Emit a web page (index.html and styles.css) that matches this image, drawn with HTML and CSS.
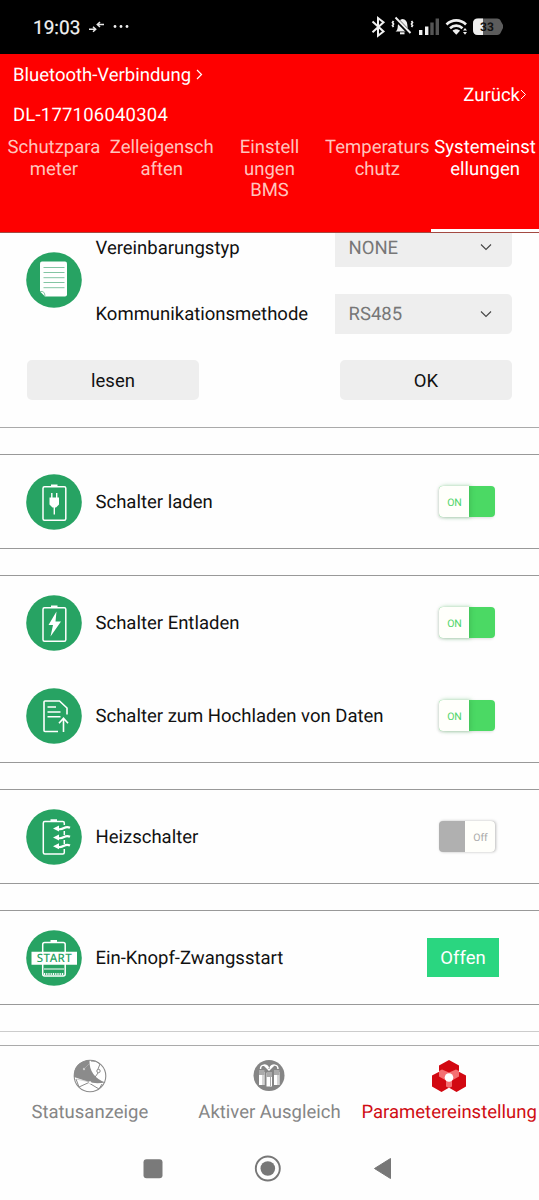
FILE: index.html
```html
<!DOCTYPE html>
<html lang="de">
<head>
<meta charset="utf-8">
<title>Parametereinstellung</title>
<link rel="stylesheet" href="styles.css">
</head>
<body>
<div class="screen">
  <div class="status">
    <span class="clock">19:03</span>
    <svg class="status-left" width="44" height="20" viewBox="0 0 44 20" fill="none" stroke="#e8e8e8" stroke-width="1.5">
      <path d="M1 12.200h6M5 9.700l2.700 2.500L5 14.700M16 7.500H9.500M12 5L9.300 7.500 12 10"/>
      <g fill="#eee" stroke="none"><circle cx="27" cy="9.500" r="1.400"/><circle cx="33" cy="9.500" r="1.400"/><circle cx="39" cy="9.500" r="1.400"/></g>
    </svg>
    <svg class="status-right" width="134" height="24" viewBox="370 15 134 24" fill="none" stroke="#f0f0f0">
      <path d="M372.500 21.500l11 10-5.500 4.200V18l5.500 4.200-11 10" stroke-width="2"/>
      <path d="M395.500 31.500c2.500-1.500 2-4 2.500-7 .5-3.500 2-5 4.500-5.500 3 .5 4.500 2 4.800 5.500.4 3 .2 5.500 2.700 7z" fill="#f0f0f0" stroke="none"/>
      <path d="M400 33.300h4.500" stroke-width="2"/>
      <path d="M395.500 18.500l14.500 15" stroke="#000" stroke-width="4"/>
      <path d="M395.500 17.500l15 15.500" stroke-width="1.900"/>
      <path d="M393.500 21l-1 1.500 1 1.500-1 1.500 1 1.500M411.500 21l1 1.500-1 1.500 1 1.500-1 1.500" stroke-width="1.700"/>
      <path d="M420.700 30v5M426.700 26.500V35" stroke-width="3.400"/>
      <path d="M432 22.500V35M437.300 18.500V35" stroke="#555" stroke-width="3.400"/>
      <path d="M446.500 24.500c5.500-5.500 14-5.500 19.500 0M450 28.200c3.700-3.500 8.800-3.500 12.500 0" stroke-width="2.600"/>
      <path d="M452.500 30.800c2-2 5.500-2 7.500 0l-3.700 4z" fill="#f0f0f0" stroke="none"/>
      <path d="M463 30.500l2-2.500 2 2.500zM463 32l2 2.800 2-2.800z" fill="#f0f0f0" stroke="none"/>
      <path d="M478 18.500h19q3 0 4 3l2 3.500v3l-2 4q-1 3-4 3h-19q-5 0-5-5v-6.500q0-5 5-5z" fill="#5c5c5c" stroke="none"/>
      <path d="M483 18.500h-5q-5 0-5 5V30q0 5 5 5h5z" fill="#eee" stroke="none"/>
      <text class="battery-level" x="487" y="31.300">33</text>
    </svg>
  </div>

  <header class="header">
    <div class="device">
      <div class="link"><span>Bluetooth-Verbindung</span><svg width="7" height="11" viewBox="0 0 7 11"><path d="M1 1l4.500 4.500L1 10" fill="none" stroke="#fff" stroke-width="1.200"/></svg></div>
      <div class="serial">DL-177106040304</div>
    </div>
    <div class="back"><span>Zurück</span><svg width="7" height="11" viewBox="0 0 7 11"><path d="M1 1l4.500 4.500L1 10" fill="none" stroke="#fff"/></svg></div>
  </header>
  <nav class="tabs">
    <div class="tab">Schutzpara<br>meter</div>
    <div class="tab">Zelleigensch<br>aften</div>
    <div class="tab">Einstell<br>ungen<br>BMS</div>
    <div class="tab">Temperaturs<br>chutz</div>
    <div class="tab active">Systemeinst<br>ellungen</div>
  </nav>

  <main class="content">
    <section class="protocol">
      <div class="fields">
        <svg class="badge" viewBox="0 0 56 56"><circle cx="28" cy="28" r="27.800" fill="#27a363"/><path d="M16 9.500h23q2 0 2 2v31q0 2-2 2H19l-5-5v-28q0-2 2-2z" fill="#fff"/><path d="M17.500 15.500h21M17.500 20.500h21M17.500 25.700h21M17.500 30.500h21M17.500 35.700h21M14 39.500q5-1 5 5" fill="none" stroke="#83c5a3"/></svg>
        <div class="field-list">
          <div class="field"><span>Vereinbarungstyp</span><div class="select"><span>NONE</span><svg width="12" height="8" viewBox="0 0 12 8"><path d="M1 1.500l5 5 5-5" fill="none" stroke="#444" stroke-width="1.100"/></svg></div></div>
          <div class="field"><span>Kommunikationsmethode</span><div class="select"><span>RS485</span><svg width="12" height="8" viewBox="0 0 12 8"><path d="M1 1.500l5 5 5-5" fill="none" stroke="#444" stroke-width="1.100"/></svg></div></div>
        </div>
      </div>
      <div class="actions"><button class="btn">lesen</button><button class="btn">OK</button></div>
    </section>

    <section class="card">
      <div class="row">
        <svg class="badge" viewBox="0 0 56 56"><circle cx="28" cy="28" r="27.800" fill="#27a363"/><rect x="17" y="12.700" width="22.800" height="33.600" rx="1.500" fill="none" stroke="#fff" stroke-width="1.500"/><path d="M25 10.500h6.500V13H25zM23.500 23.500H33v7L30 33.500h-3.500l-3-3z" fill="#fff"/><path d="M25.800 19v5M30.700 19v5M28.300 33v7.500" stroke="#fff" stroke-width="1.400"/></svg>
        <span class="label">Schalter laden</span>
        <div class="toggle on"><span>ON</span></div>
      </div>
    </section>

    <section class="card">
      <div class="row">
        <svg class="badge" viewBox="0 0 56 56"><circle cx="28" cy="28" r="27.800" fill="#27a363"/><rect x="17" y="12.700" width="22.800" height="33.600" rx="1.500" fill="none" stroke="#fff" stroke-width="1.500"/><path d="M25 10.500h6.500V13H25zM30.500 16.500l-8 13.500h4.500l-2.500 11.500 10.500-15h-5.500z" fill="#fff"/></svg>
        <span class="label">Schalter Entladen</span>
        <div class="toggle on"><span>ON</span></div>
      </div>
      <div class="row">
        <svg class="badge" viewBox="0 0 56 56"><circle cx="28" cy="28" r="27.800" fill="#27a363"/><path d="M32 43.500H19q-1 0-1-1V14q0-1 1-1h14.500l7.500 7v6.500M21.500 19H30M21.500 24h13M21.500 28.700h13M37.500 44V30.500M33 35.300l4.500-5 4.500 5" fill="none" stroke="#fff" stroke-width="1.600"/></svg>
        <span class="label">Schalter zum Hochladen von Daten</span>
        <div class="toggle on"><span>ON</span></div>
      </div>
    </section>

    <section class="card">
      <div class="row">
        <svg class="badge" viewBox="0 0 56 56"><circle cx="28" cy="28" r="27.800" fill="#27a363"/><path d="M38.300 16v-2q0-1.500-1.500-1.500h-18q-1.500 0-1.500 1.500v29.500q0 1.500 1.500 1.500h18q1.500 0 1.500-1.500V40M38.300 22v4M38.300 31v4" fill="none" stroke="#fff" stroke-width="1.500"/><path d="M24.500 10.200H31v2.500h-6.500zM27 19.500l6-3v6zM27 28.500l6-3v6zM27 37.300l6-3v6z" fill="#fff"/><path d="M32 20q3 .8 6-1t6-.3M32 29q3 .8 6-1t6-.3M32 37.800q3 .8 6-1t6-.3" fill="none" stroke="#fff" stroke-width="2.200"/></svg>
        <span class="label">Heizschalter</span>
        <div class="toggle off"><span>Off</span></div>
      </div>
    </section>

    <section class="card">
      <div class="row">
        <svg class="badge" viewBox="0 0 56 56"><circle cx="28" cy="28" r="27.800" fill="#27a363"/><rect x="16.700" y="12.500" width="22.500" height="33.500" rx="2" fill="none" stroke="#fff" stroke-width="1.500"/><path d="M24.500 10H31v2.500h-6.500zM5.500 21.700H51v13H5.500z" fill="#fff"/><path d="M18 39h20" stroke="#fff"/><path d="M18 44h20" stroke="#fff" stroke-width="1.800" stroke-dasharray="1 .8"/><text class="start-text" x="10.800" y="32" textLength="35">START</text></svg>
        <span class="label">Ein-Knopf-Zwangsstart</span>
        <button class="open">Offen</button>
      </div>
    </section>
    <div class="card-edge"></div>
  </main>

  <nav class="bottom">
    <div class="item">
      <svg width="34" height="34" viewBox="0 0 34 34"><circle cx="17" cy="17" r="15.800" fill="#fff" stroke="#8b8b8b" stroke-width="1.100"/><path d="M16.500 1C16 12 22 20 32.500 23.500Q22 25 16 23L1 18Q0 3 16.500 1z" fill="#8b8b8b"/><g fill="none" stroke="#8b8b8b"><path d="M18 2q5-1 9 3l-2 5v4l-5 7M3 20l3 8M6 28l11-5M16 24l10 6 3-5"/><circle cx="25.500" cy="12" r="1.700" fill="#fff"/></g><circle cx="11" cy="10" r="1.200" fill="#ccc"/><path d="M11 10l6-6M3 20l14 3" stroke="#bbb" stroke-width=".6"/><circle cx="17" cy="23.500" r="1.300" fill="#fff"/></svg>
      <span>Statusanzeige</span>
    </div>
    <div class="item">
      <svg width="34" height="34" viewBox="0 0 34 34"><circle cx="17" cy="16.500" r="15.500" fill="#858585"/><path d="M7 13h5.500v13H7zM14.500 14H20v13.500h-5.500zM22 13h5.500v13H22z" fill="#fff"/><path d="M7 11h5.500v5H7zM14.500 13H20v5h-5.500zM22 11h5.500v5H22z" fill="#aaa"/><path d="M11 16v10M18.500 18v9M26 16v10" stroke="#aaa"/><path d="M8.500 10c0-5 6-5 8-1M18 9c2-4 8-4 8 1M12 6l5 5 5-5" fill="none" stroke="#fff" stroke-width="1.500"/></svg>
      <span>Aktiver Ausgleich</span>
    </div>
    <div class="item selected">
      <svg width="34" height="34" viewBox="0 0 34 34"><path d="M17 1l10 5.500v11L17 23 7 17.500v-11zM9.500 11.500l9.500 5v11L9.500 33 0 27.500v-11zM24.500 11.500l9.500 5v11L24.500 33 15 27.500v-11z" fill="#d20811"/><path d="M7 12l3-1.500 7 3 7-3 3 1.500v5.500l-7 4v6l-3 1.500-3-1.500v-6l-7-4z" fill="#f46f72"/><circle cx="17" cy="18.500" r="4.300" fill="#fff"/></svg>
      <span>Parametereinstellung</span>
    </div>
  </nav>
  <div class="system-nav">
    <svg width="252" height="30" viewBox="141 1153 252 30"><rect x="143.500" y="1159.300" width="19" height="19" rx="3" fill="#7a7a7a"/><circle cx="267.800" cy="1168.500" r="12" fill="none" stroke="#777" stroke-width="1.900"/><circle cx="267.800" cy="1168.500" r="7.300" fill="#777"/><path d="M390.500 1158.500v20l-16-10z" fill="#777" stroke="#777" stroke-linejoin="round"/></svg>
  </div>
</div>
</body>
</html>
```
FILE: styles.css
```css
* { box-sizing: border-box; }
body { margin: 0; background: #fff; font-family: Roboto, "Liberation Sans", sans-serif; font-size: 18.5px; color: #111; text-rendering: geometricPrecision; }
svg { display: block; flex: none; }
button { border: 0; padding: 0; font: inherit; color: inherit; }
.screen { width: 539px; height: 1200px; overflow: hidden; display: flex; flex-direction: column; background: #fefefe; }

.status { height: 54px; flex: none; background: #000; display: flex; align-items: center; padding: 0 35px 0 33px; color: #f2f2f2; }
.clock { font-size: 19px; font-weight: 400; width: 55px; -webkit-text-stroke: .2px #f2f2f2; }
.status-right { margin-left: auto; }
.battery-level { font-size: 12px; font-weight: 700; fill: #111; stroke: none; text-anchor: middle; }

.header { height: 80px; flex: none; background: #fe0000; color: #fff; display: flex; justify-content: space-between; padding: 1px 12px 0 13px; }
.device { line-height: 40px; }
.link, .back { display: flex; align-items: center; height: 40px; }
.link { gap: 5px; }
.link svg { margin-top: -2px; }
.serial { letter-spacing: .2px; }
.back { height: 80px; }
.back svg { margin-top: -2px; }

.tabs { height: 99px; flex: none; background: #fe0000; border-bottom: 1px solid #a34a42; display: grid; grid-template-columns: repeat(5, 1fr); }
.tab { color: #ffc4bd; text-align: center; line-height: 21.5px; padding-top: 3px; white-space: nowrap; }
.tab.active { color: #fff; border-bottom: 3px solid #fff; }

.content { height: 812px; flex: none; overflow: hidden; }
.protocol { height: 195px; border-bottom: 1px solid #aaa; }
.fields { display: flex; gap: 13.500px; padding-left: 26px; height: 100.500px; }
.fields .badge { margin-top: 19px; }
.field-list { flex: 1; display: flex; flex-direction: column; justify-content: space-between; margin-top: -5.500px; padding-right: 27px; }
.field { display: flex; align-items: center; justify-content: space-between; height: 39.500px; }
.field span { padding-top: 1px; }
.select { width: 177px; height: 39.500px; background: #eee; border-radius: 0 5px 5px 0; display: flex; align-items: center; justify-content: space-between; padding: 0 20px 0 13.500px; color: #777; }
.actions { display: flex; justify-content: space-between; padding: 26.500px 27px 0; }
.btn { width: 172px; height: 40px; border-radius: 5px; background: #eee; padding-top: 1px; }

.badge { width: 56px; height: 56px; flex: none; }
.card { margin-top: 26px; border-top: 1px solid #999; border-bottom: 1px solid #999; }
.row { height: 93px; display: flex; align-items: center; padding: 0 40px 0 26px; }
.label { margin-left: 13.500px; padding-top: 1px; flex: 1; }
.start-text { font-family: "Noto Sans", sans-serif; font-size: 11.500px; font-weight: 500; fill: #27a363; }
.toggle { width: 56px; height: 31px; margin-right: 4px; border-radius: 4px; font-size: 10.500px; display: flex; align-items: center; }
.toggle span { width: 30px; height: 31px; padding-left: 1px; line-height: 33px; text-align: center; background: #fffffb; }
.toggle.on { background: #4bd964; color: #4ed469; box-shadow: -1px 1px 3px #ddd; }
.toggle.on span { border-radius: 4px 0 0 4px; box-shadow: 2px 0 4px #3cae5080; }
.toggle.off { background: #b0b0b0; color: #aaa; justify-content: flex-end; box-shadow: 1px 0 3px #bbb; }
.toggle.off span { border-radius: 0 4px 4px 0; }
.open { width: 72px; height: 39px; background: #2ad680; color: #fff; padding-top: 1px; }
.card-edge { margin-top: 26px; border-top: 1px solid #ccc; }

.bottom { height: 91px; flex: none; border-top: 1px solid #aaa; display: grid; grid-template-columns: repeat(3, 179.670px); color: #868686; }
.item { display: flex; flex-direction: column; align-items: center; padding-top: 12.500px; gap: 8px; line-height: 22px; }
.item.selected { color: #d00d14; }
.system-nav { padding: 17px 0 0 141px; }
```
